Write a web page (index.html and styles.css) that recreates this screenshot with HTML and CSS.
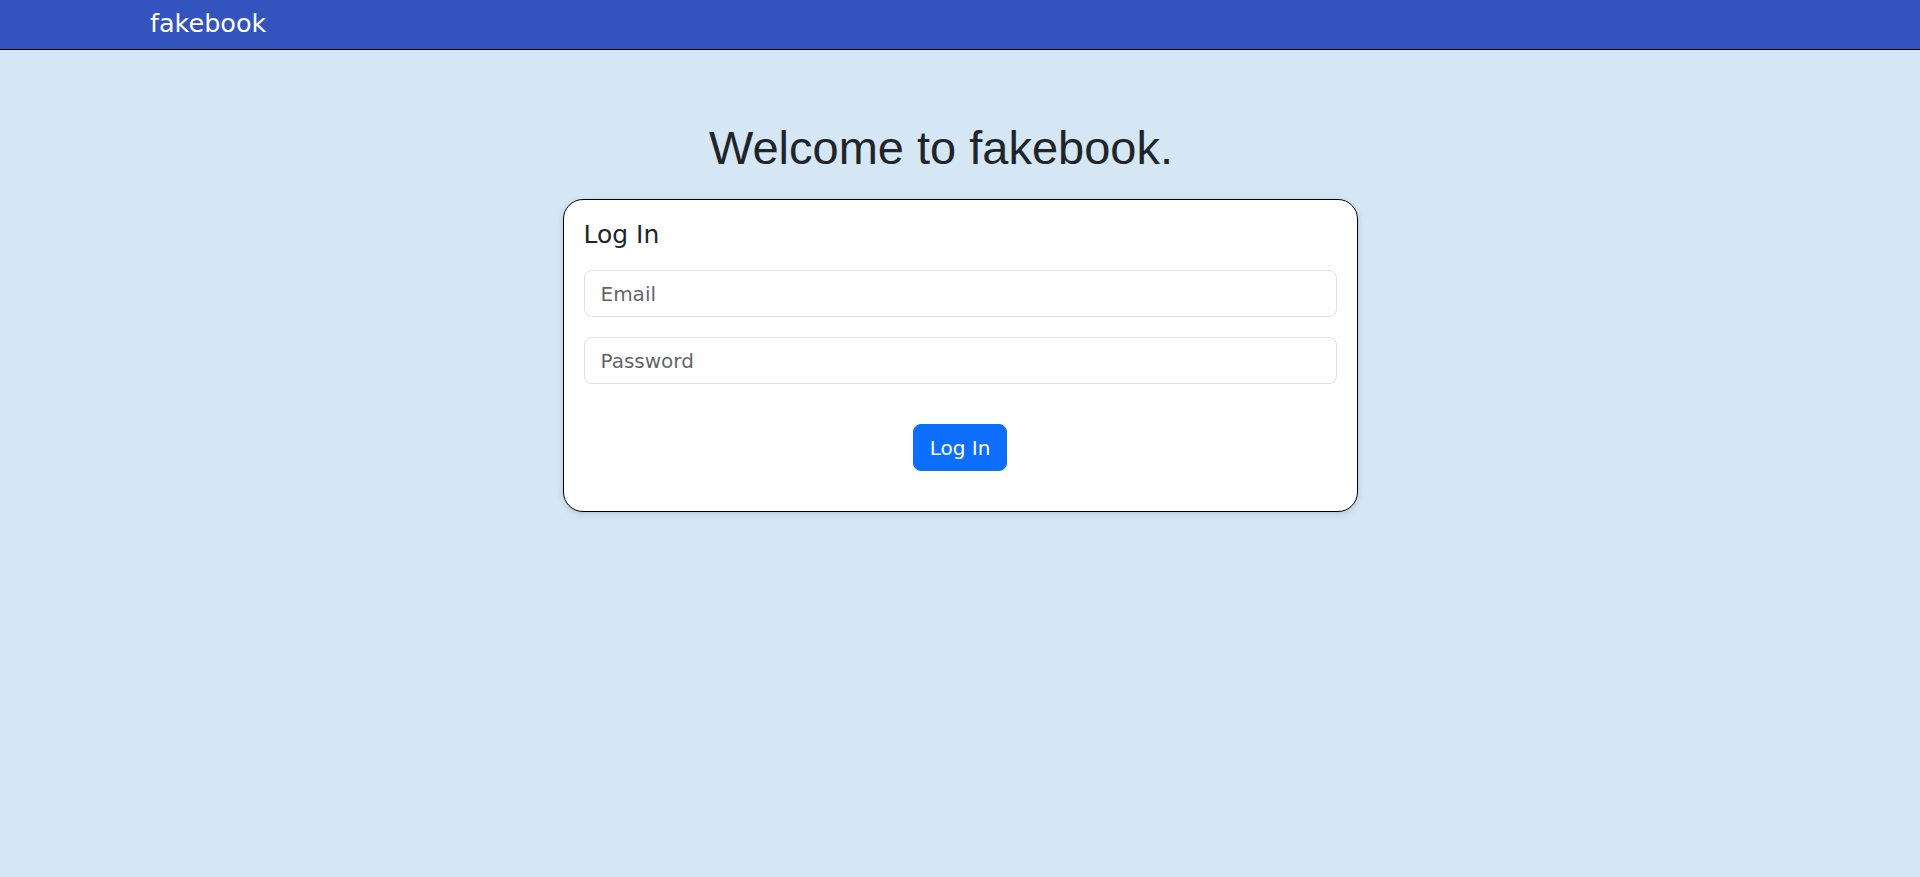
FILE: index.html
```html
<!DOCTYPE html>
<html lang="en">
<head>
<meta charset="utf-8">
<title>fakebook</title>
<link rel="stylesheet" href="styles.css">
</head>
<body>
<nav class="navbar">
  <a class="brand" href="#">fakebook</a>
</nav>
<main class="main">
  <h1 class="welcome">Welcome to fakebook.</h1>
  <form class="card">
    <h2 class="card-title">Log In</h2>
    <input class="field" type="email" placeholder="Email">
    <input class="field" type="password" placeholder="Password">
    <div class="actions">
      <button class="btn" type="button">Log In</button>
    </div>
  </form>
</main>
</body>
</html>
```
FILE: styles.css
```css
* { box-sizing: border-box; }
html, body {
  margin: 0;
  padding: 0;
}
body {
  background: #d5e7f5;
  font-family: "DejaVu Sans", sans-serif;
  color: #212529;
  min-height: 877px;
}
.navbar {
  height: 50px;
  background: #3353be;
  border-bottom: 1px solid #000;
  display: flex;
  align-items: center;
  padding-left: 150px;
}
.brand {
  color: #fff;
  text-decoration: none;
  font-size: 25.5px;
  line-height: 1;
  margin-top: -1px;
}
.main {
  display: flex;
  flex-direction: column;
  align-items: center;
}
.welcome {
  font-family: "Liberation Sans", Arial, sans-serif;
  font-weight: 400;
  font-size: 47px;
  line-height: 56px;
  margin: 70px 38px 23px 0;
  color: #212529;
}
.card {
  width: 795px;
  background: #fff;
  border: 1px solid #000;
  border-radius: 20px;
  box-shadow: 0 2px 6px rgba(0,0,0,0.15);
  padding: 20px 20px 40px;
  display: flex;
  flex-direction: column;
}
.card-title {
  font-size: 25px;
  font-weight: 400;
  line-height: 30px;
  margin: 0 0 20px;
  color: #212529;
}
.field {
  height: 47px;
  width: 100%;
  border: 1px solid #dee2e6;
  border-radius: 8px;
  padding: 0 16px;
  font-family: "DejaVu Sans", sans-serif;
  font-size: 20px;
  color: #212529;
  background: #fff;
  margin: 0 0 20px;
  outline: none;
}
.field::placeholder {
  color: rgba(33,37,41,0.72);
}
.actions {
  display: flex;
  justify-content: center;
  padding-top: 20px;
}
.btn {
  height: 47px;
  padding: 0 16px;
  border: 1px solid #0d6efd;
  background: #0d6efd;
  color: #fff;
  border-radius: 8px;
  font-family: "DejaVu Sans", sans-serif;
  font-size: 20px;
  line-height: 1;
}
```
